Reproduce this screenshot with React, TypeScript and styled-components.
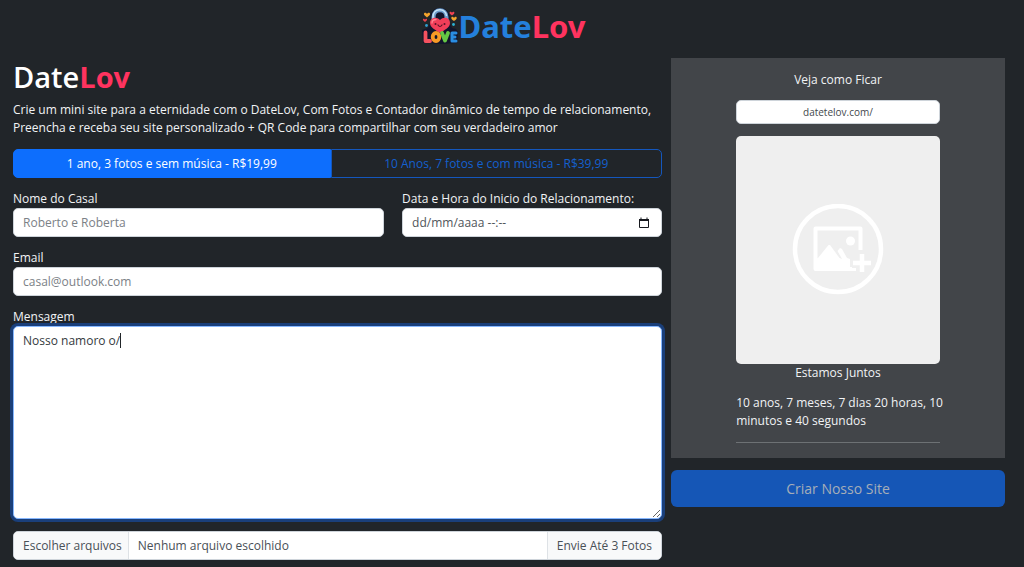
import React, { useState } from 'react';
import styled, { createGlobalStyle } from 'styled-components';

const GlobalStyle = createGlobalStyle`
  *, *::before, *::after { box-sizing: border-box; }
  body {
    margin: 0;
    background: #212529;
    color: #f1f3f5;
    font: 400 12px/18px "Segoe UI", "Open Sans", "Noto Sans", sans-serif;
  }
  h1, h2, p, hr { margin: 0; }
  button, input, textarea { font: inherit; }
`;

const Header = styled.header`
  display: flex;
  align-items: center;
  justify-content: center;
  height: 52px;
  padding-right: 16px;
`;

const Brand = styled.a`
  display: flex;
  align-items: center;
  color: #2480dc;
  font: 700 31px/36px "Noto Sans", "Open Sans", sans-serif;
  text-decoration: none;
`;

const Accent = styled.span`
  color: #ff335f;
  font-weight: 700;
`;

const Page = styled.main`
  display: grid;
  grid-template-columns: minmax(0, 649fr) minmax(0, 334fr);
  align-items: start;
  gap: 9px;
  padding: 6px 19px 8px 13px;
`;

const Form = styled.form`
  display: flex;
  flex-direction: column;
  gap: 12px;
`;

const Title = styled.h1`
  margin-bottom: 6px;
  color: #fff;
  font-size: 29px;
  font-weight: 600;
  line-height: 37px;
`;

const PlanGroup = styled.div`
  display: flex;
`;

const PlanButton = styled.button<{ $active: boolean }>`
  flex: 1 1 auto;
  height: 29px;
  padding: 0 9px;
  border: 1px solid ${p => (p.$active ? '#0d6efd' : '#1457bd')};
  background: ${p => (p.$active ? '#0d6efd' : 'transparent')};
  color: ${p => (p.$active ? '#fff' : '#1460cf')};
  cursor: pointer;
  &:first-child { border-radius: 5px 0 0 5px; }
  &:last-child { border-radius: 0 5px 5px 0; }
`;

const FieldRow = styled.div`
  display: grid;
  grid-template-columns: repeat(12, minmax(0, 1fr));
  column-gap: 18px;
`;

const Field = styled.div<{ $span?: number }>`
  position: relative;
  display: flex;
  flex-direction: column;
  grid-column: span ${p => p.$span ?? 12};
`;

const Input = styled.input`
  width: 100%;
  height: 29px;
  padding: 0 9px;
  border: 1px solid #ced4da;
  border-radius: 5px;
  background: #fff;
  color: #212529;
  outline: none;
  &::placeholder { color: #7b8186; opacity: 1; }
`;

const DateBox = styled.div`
  display: flex;
  align-items: center;
  padding-right: 11px;
  border: 1px solid #ced4da;
  border-radius: 5px;
  background: #fff;
`;

const DateInput = styled(Input)`
  flex: 1;
  height: 27px;
  border: 0;
  &::placeholder { color: #50555a; }
`;

const IconButton = styled.button`
  display: flex;
  padding: 0;
  border: 0;
  background: none;
  cursor: pointer;
`;

const Message = styled.textarea`
  display: block;
  width: 100%;
  height: 193px;
  padding: 5px 9px;
  border: 1px solid #86b7fe;
  border-radius: 5px;
  background: #fff;
  color: #343a40;
  outline: none;
  box-shadow: 0 0 0 3px #1a3f7a;
  resize: vertical;
`;

const Caret = styled.span`
  position: absolute;
  top: 25px;
  left: 107px;
  width: 1px;
  height: 15px;
  background: #212529;
  pointer-events: none;
`;

const FileGroup = styled.div`
  display: flex;
  height: 29px;
  overflow: hidden;
  border: 1px solid #ced4da;
  border-radius: 5px;
  background: #fff;
  color: #495057;
  line-height: 27px;
`;

const FileLabel = styled.label`
  display: flex;
  flex: 1;
  cursor: pointer;
`;

const HiddenFile = styled.input`
  position: absolute;
  width: 1px;
  height: 1px;
  opacity: 0;
`;

const FileButton = styled.span`
  padding: 0 6px 0 9px;
  border-right: 1px solid #dee2e6;
  background: #f8f9fa;
`;

const FileName = styled.span`
  padding: 0 9px;
`;

const FileHint = styled.span`
  padding: 0 9px;
  border-left: 1px solid #dee2e6;
  background: #f8f9fa;
`;

const Side = styled.aside`
  display: flex;
  flex-direction: column;
  gap: 12px;
`;

const Preview = styled.section`
  display: flex;
  flex-direction: column;
  align-items: center;
  padding: 13px 0 15px;
  background: #424549;
  font-weight: 500;
`;

const PreviewBody = styled.div`
  display: flex;
  flex-direction: column;
  width: 61%;
`;

const PreviewTitle = styled.h2`
  margin-bottom: 11px;
  font-size: 12px;
  font-weight: 500;
  line-height: 18px;
  text-align: center;
`;

const UrlInput = styled(Input)`
  height: 24px;
  margin-bottom: 12px;
  color: #43484d;
  font-size: 10px;
  font-weight: 400;
  text-align: center;
`;

const Photo = styled.div`
  display: flex;
  align-items: center;
  justify-content: center;
  height: 228px;
  border-radius: 5px;
  background: #efefef;
`;

const Together = styled.p`
  margin-bottom: 12px;
  text-align: center;
`;

const Counter = styled.p`
  margin-bottom: 12px;
  white-space: nowrap;
`;

const Divider = styled.hr`
  height: 1px;
  border: 0;
  background: #6d7174;
`;

const Submit = styled.button`
  height: 37px;
  border: 0;
  border-radius: 6px;
  background: #1556b6;
  color: #a6aeb8;
  font-size: 14px;
`;

const Heart = ({ x, y, s, fill }: { x: number; y: number; s: number; fill: string }) => (
  <path
    transform={`translate(${x} ${y}) scale(${s})`}
    d="M0 1.2C-1-1-4-.5-3.3 1.8C-2.9 3.1-1 4.2 0 5C1 4.2 2.9 3.1 3.3 1.8C4-.5 1-1 0 1.2Z"
    fill={fill}
  />
);

const LoveLogo = () => (
  <svg width="36" height="36" viewBox="0 0 36 36" aria-hidden="true">
    <path d="M9 13C7 4 12 0 18 0S29 4 27 13L30 20 34 21 36 24 35 35 20 36 1 35 0 22 6 20Z" fill="#12152c" />
    <path d="M11.500 13V9C11.500 0 24.500 0 24.500 9V13" fill="none" stroke="#6f9fce" strokeWidth="4" />
    <path d="M11 11V9C11 -.5 24 -.5 24.500 8" fill="none" stroke="#c7e4f7" strokeWidth="1.500" />
    <path d="M18 12C14 8 8 10 8 15C8 20 14 22 18 25C22 22 28 20 28 15C28 10 22 8 18 12Z" fill="#f23e59" />
    <path d="M10 15Q10 11.500 14 11.500" fill="none" stroke="#ff8590" strokeWidth="1.300" strokeLinecap="round" />
    <circle cx="13.500" cy="16" r="1" fill="#581329" />
    <circle cx="22.500" cy="16" r="1" fill="#581329" />
    <path d="M16 17Q18 20 20 17" fill="none" stroke="#581329" strokeWidth="1.200" strokeLinecap="round" />
    <Heart x={5} y={5} s={0.9} fill="#f5a52c" />
    <Heart x={30} y={4} s={0.7} fill="#f14352" />
    <Heart x={32} y={9} s={0.8} fill="#f5a52c" />
    <Heart x={3} y={11} s={0.6} fill="#e7414f" />
    <circle cx="4.500" cy="17.500" r="1.400" fill="#2f9fd0" />
    <circle cx="31.500" cy="16.500" r="1.400" fill="#2bb2d2" />
    <g fill="none" strokeWidth="3.800" strokeLinejoin="round" strokeLinecap="round">
      <path d="M3.500 24.500V33H8" stroke="#f5525f" />
      <ellipse cx="14" cy="29" rx="3.300" ry="4" stroke="#f79a25" />
      <path d="M20 25L23 32.500L26 25" stroke="#65c844" />
      <path d="M34 25H30V33H34M30 29H33" stroke="#2a8ee2" strokeWidth="3" />
    </g>
  </svg>
);

const CalendarIcon = () => (
  <svg width="12" height="12" viewBox="0 0 12 12" aria-hidden="true">
    <path d="M1.500 2.500H10.500V10.500H1.500Z" fill="none" stroke="#17191f" />
    <path d="M1 2H11V4H1Z" fill="#17191f" />
    <path d="M3 .5V3M9 .5V3" stroke="#17191f" />
  </svg>
);

const AddPhotoIcon = () => (
  <svg width="92" height="92" viewBox="0 0 92 92" aria-hidden="true">
    <circle cx="46" cy="45" r="43" fill="none" stroke="#fff" strokeWidth="4.500" />
    <path d="M68.500 46V24.500H23.500V65H64" fill="none" stroke="#fff" strokeWidth="4" strokeLinejoin="round" />
    <path d="M60 61H66V64H60Z" fill="#efefef" />
    <circle cx="58.500" cy="37" r="4.500" fill="#fff" />
    <path d="M23 55L26 54 36.500 41 38 41 47.500 54 50 55 45.500 47 48 44 50 45 55 54 58 55V65H23Z" fill="#fff" />
    <path d="M70 50V68M61 59H79" stroke="#fff" strokeWidth="4.500" />
  </svg>
);

const plans = [
  '1 ano, 3 fotos e sem música - R$19,99',
  '10 Anos, 7 fotos e com música - R$39,99',
];

const draft = 'Nosso namoro o/';

export default function App() {
  const [plan, setPlan] = useState(0);
  const [message, setMessage] = useState(draft);
  const [touched, setTouched] = useState(false);

  return (
    <>
      <GlobalStyle />
      <Header>
        <Brand href="#">
          <LoveLogo />
          <span>Date<Accent>Lov</Accent></span>
        </Brand>
      </Header>
      <Page>
        <Form>
          <div>
            <Title>Date<Accent>Lov</Accent></Title>
            <p>
              Crie um mini site para a eternidade com o DateLov, Com Fotos e Contador dinâmico de tempo de relacionamento,
              <br />
              Preencha e receba seu site personalizado + QR Code para compartilhar com seu verdadeiro amor
            </p>
          </div>
          <PlanGroup>
            {plans.map((name, i) => (
              <PlanButton key={name} type="button" $active={plan === i} aria-pressed={plan === i} onClick={() => setPlan(i)}>
                {name}
              </PlanButton>
            ))}
          </PlanGroup>
          <FieldRow>
            <Field $span={7}>
              <label htmlFor="couple">Nome do Casal</label>
              <Input id="couple" placeholder="Roberto e Roberta" />
            </Field>
            <Field $span={5}>
              <label htmlFor="start">Data e Hora do Inicio do Relacionamento:</label>
              <DateBox>
                <DateInput id="start" placeholder="dd/mm/aaaa --:--" />
                <IconButton type="button" aria-label="Abrir calendário"><CalendarIcon /></IconButton>
              </DateBox>
            </Field>
          </FieldRow>
          <Field>
            <label htmlFor="email">Email</label>
            <Input id="email" type="email" placeholder="casal@outlook.com" />
          </Field>
          <Field>
            <label htmlFor="message">Mensagem</label>
            <Message
              id="message"
              value={message}
              onChange={e => setMessage(e.target.value)}
              onFocus={() => setTouched(true)}
            />
            {!touched && <Caret aria-hidden="true" />}
          </Field>
          <FileGroup>
            <FileLabel htmlFor="photos">
              <FileButton>Escolher arquivos</FileButton>
              <FileName>Nenhum arquivo escolhido</FileName>
            </FileLabel>
            <HiddenFile id="photos" type="file" multiple />
            <FileHint>Envie Até 3 Fotos</FileHint>
          </FileGroup>
        </Form>
        <Side>
          <Preview>
            <PreviewBody>
              <PreviewTitle>Veja como Ficar</PreviewTitle>
              <UrlInput aria-label="Endereço do site" defaultValue="datetelov.com/" readOnly />
              <Photo><AddPhotoIcon /></Photo>
              <Together>Estamos Juntos</Together>
              <Counter>
                10 anos, 7 meses, 7 dias 20 horas, 10
                <br />
                minutos e 40 segundos
              </Counter>
              <Divider />
            </PreviewBody>
          </Preview>
          <Submit type="button" disabled>Criar Nosso Site</Submit>
        </Side>
      </Page>
    </>
  );
}
